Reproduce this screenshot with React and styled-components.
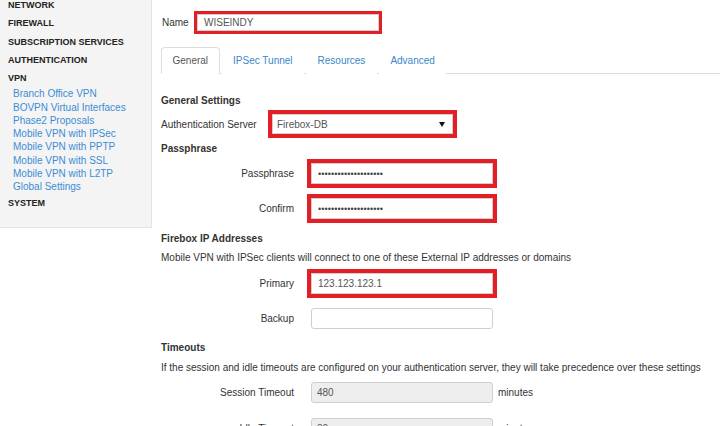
import React from "react";
import styled, { createGlobalStyle } from "styled-components";

const Global = createGlobalStyle`
  html, body { margin: 0; padding: 0; background: #fff; }
  body {
    font-family: "Liberation Sans", Arial, sans-serif;
    font-size: 10px;
    color: #333;
  }
  * { box-sizing: border-box; }
`;

const RED = "#e31e24";

const Page = styled.div`
  display: flex;
  align-items: flex-start;
  width: 720px;
  height: 426px;
  overflow: hidden;
`;

const Sidebar = styled.nav`
  flex: 0 0 152px;
  height: 228px;
  background: #f4f4f4;
  border-right: 1px solid #e3e3e3;
  border-bottom: 1px solid #e3e3e3;
  padding-left: 8px;
  overflow: hidden;
`;

const NavList = styled.div`
  margin-top: -4px;
  display: flex;
  flex-direction: column;
`;

const NavHeader = styled.div`
  height: 18.25px;
  line-height: 18px;
  font-size: 9px;
  font-weight: bold;
  color: #222;
  white-space: nowrap;
`;

const NavLinks = styled.div`
  padding-left: 5px;
  display: flex;
  flex-direction: column;
`;

const NavLink = styled.a`
  font-size: 10px;
  line-height: 13.3px;
  color: #3b8dd5;
  text-decoration: none;
  white-space: nowrap;
`;

const Main = styled.main`
  flex: 1;
  min-width: 0;
  padding-left: 9px;
  display: flex;
  flex-direction: column;
`;

const NameRow = styled.div`
  display: flex;
  align-items: center;
  margin-top: 11px;
  height: 23px;
`;

const NameLabel = styled.label`
  width: 33px;
  padding-left: 1px;
  color: #333;
`;

const Box = styled.div`
  width: ${(p) => p.$w}px;
  height: ${(p) => p.$h}px;
  border: ${(p) => p.$b}px solid ${(p) => (p.$red ? RED : "transparent")};
  display: flex;
`;

const TextInput = styled.div`
  flex: 1;
  height: 100%;
  border: 1px solid #cfcfcf;
  border-radius: ${(p) => (p.$red ? 0 : 3)}px;
  background: ${(p) => (p.$disabled ? "#eeeeee" : "#fff")};
  color: #555;
  padding-left: ${(p) => p.$pad || 6}px;
  display: flex;
  align-items: center;
  font-size: 10px;
  white-space: nowrap;
  overflow: hidden;
`;

const Dots = styled.span`
  font-size: 9px;
  letter-spacing: 0.1px;
  color: #444;
`;

const Select = styled.div`
  flex: 1;
  height: 100%;
  border: 1px solid #cfcfcf;
  background: #fff;
  color: #555;
  padding: 0 7px 0 4px;
  display: flex;
  align-items: center;
  justify-content: space-between;
`;

const Tabs = styled.div`
  display: flex;
  align-items: flex-end;
  margin-top: 13px;
  height: 27px;
  border-bottom: 1px solid #ddd;
`;

const Tab = styled.div`
  height: 27px;
  margin-bottom: -1px;
  margin-right: 2px;
  padding: 0 10.5px;
  display: flex;
  align-items: center;
  border: 1px solid ${(p) => (p.$active ? "#ddd" : "transparent")};
  border-bottom-color: ${(p) => (p.$active ? "#fff" : "transparent")};
  border-radius: 4px 4px 0 0;
  background: #fff;
  color: ${(p) => (p.$active ? "#555" : "#3a87c8")};
  font-size: 10px;
`;

const SectionTitle = styled.div`
  margin-top: ${(p) => p.$mt}px;
  height: ${(p) => p.$h}px;
  line-height: ${(p) => p.$h}px;
  font-weight: bold;
  color: #333;
`;

const Description = styled.div`
  height: ${(p) => p.$h}px;
  line-height: ${(p) => p.$h}px;
  color: #333;
  white-space: nowrap;
`;

const InlineRow = styled.div`
  display: flex;
  align-items: center;
  margin-top: ${(p) => p.$mt || 0}px;
`;

const InlineLabel = styled.label`
  width: 107px;
  color: #333;
`;

const FieldRow = styled.div`
  display: flex;
  align-items: center;
  gap: 13px;
  margin-top: ${(p) => p.$mt || 0}px;
`;

const FieldLabel = styled.label`
  width: 133px;
  text-align: right;
  color: #333;
  white-space: nowrap;
`;

const Unit = styled.span`
  margin-left: -12px;
  color: #333;
`;

const Arrow = () => (
  <svg width="6" height="5" viewBox="0 0 6 5">
    <path d="M0 0h6L3 5z" fill="#111" />
  </svg>
);

const Field = ({ label, red, mt, children, disabled, unit, b = 4 }) => (
  <FieldRow $mt={mt}>
    <FieldLabel>{label}</FieldLabel>
    <Box $w={190} $h={29} $b={b} $red={red}>
      <TextInput $red={red} $disabled={disabled} $pad={disabled ? 5 : 6}>
        {children}
      </TextInput>
    </Box>
    {unit && <Unit>{unit}</Unit>}
  </FieldRow>
);

const sections = ["NETWORK", "FIREWALL", "SUBSCRIPTION SERVICES", "AUTHENTICATION", "VPN"];
const vpnLinks = [
  "Branch Office VPN",
  "BOVPN Virtual Interfaces",
  "Phase2 Proposals",
  "Mobile VPN with IPSec",
  "Mobile VPN with PPTP",
  "Mobile VPN with SSL",
  "Mobile VPN with L2TP",
  "Global Settings",
];

const dots = "••••••••••••••••••••";

export default function App() {
  return (
    <>
      <Global />
      <Page>
        <Sidebar>
          <NavList>
            {sections.map((s) => (
              <NavHeader key={s}>{s}</NavHeader>
            ))}
            <NavLinks>
              {vpnLinks.map((l) => (
                <NavLink key={l} href="#">
                  {l}
                </NavLink>
              ))}
            </NavLinks>
            <NavHeader>SYSTEM</NavHeader>
          </NavList>
        </Sidebar>
        <Main>
          <NameRow>
            <NameLabel>Name</NameLabel>
            <Box $w={188} $h={23} $b={3} $red>
              <TextInput $red $pad={6}>WISEINDY</TextInput>
            </Box>
          </NameRow>

          <Tabs>
            <Tab $active>General</Tab>
            <Tab>IPSec Tunnel</Tab>
            <Tab>Resources</Tab>
            <Tab>Advanced</Tab>
          </Tabs>

          <SectionTitle $mt={17} $h={19}>General Settings</SectionTitle>
          <InlineRow>
            <InlineLabel>Authentication Server</InlineLabel>
            <Box $w={189} $h={28} $b={4} $red>
              <Select>
                <span>Firebox-DB</span>
                <Arrow />
              </Select>
            </Box>
          </InlineRow>

          <SectionTitle $mt={0} $h={21}>Passphrase</SectionTitle>
          <Field label="Passphrase" red>
            <Dots>{dots}</Dots>
          </Field>
          <Field label="Confirm" red mt={6}>
            <Dots>{dots}</Dots>
          </Field>

          <SectionTitle $mt={6} $h={20}>Firebox IP Addresses</SectionTitle>
          <Description $h={18}>
            Mobile VPN with IPSec clients will connect to one of these External IP addresses or domains
          </Description>
          <Field label="Primary" red mt={2}>
            123.123.123.1
          </Field>
          <Field label="Backup" mt={6} />

          <SectionTitle $mt={5} $h={20}>Timeouts</SectionTitle>
          <Description $h={20}>
            If the session and idle timeouts are configured on your authentication server, they will take precedence over these settings
          </Description>
          <Field label="Session Timeout" disabled unit="minutes">
            480
          </Field>
          <Field label="Idle Timeout" disabled unit="minutes" mt={7}>
            30
          </Field>
        </Main>
      </Page>
    </>
  );
}
